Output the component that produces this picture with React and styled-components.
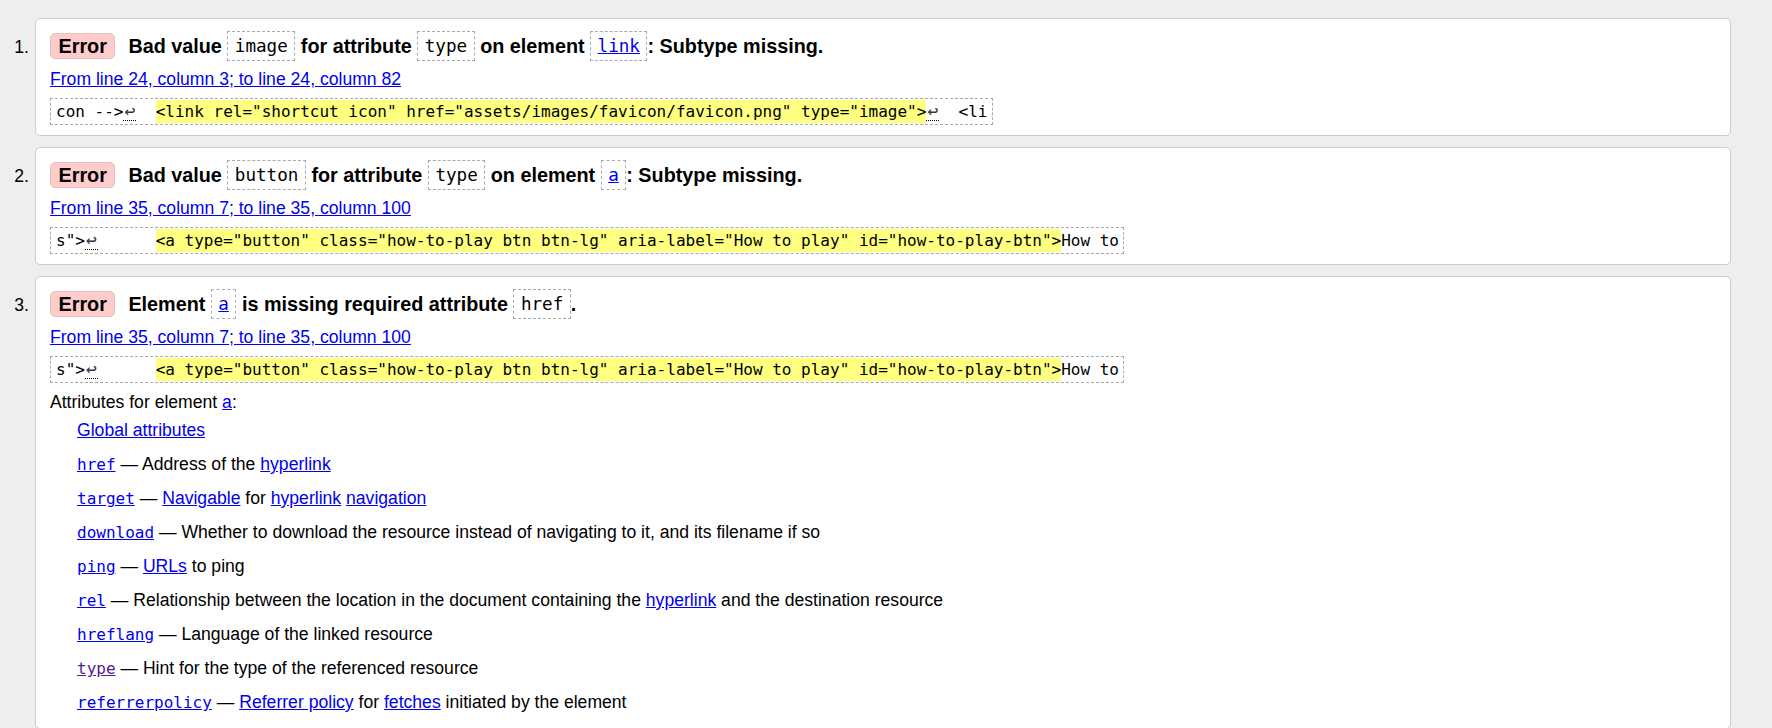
import React from 'react';
import styled, { createGlobalStyle } from 'styled-components';

const GlobalStyle = createGlobalStyle`
  html, body {
    margin: 0;
    padding: 0;
    background: #eeeeee;
    overflow: hidden;
  }
  body {
    font-family: "Liberation Sans", Arial, sans-serif;
    font-size: 17.6px;
    color: #000;
  }
`;

const List = styled.ol`
  list-style: none;
  margin: 0;
  padding: 18px 41px 0 0;
  display: flex;
  flex-direction: column;
  gap: 11px;
`;

const Item = styled.li`
  display: flex;
  align-items: baseline;
`;

const Num = styled.span`
  width: 29px;
  padding-right: 6px;
  flex: none;
  text-align: right;
  line-height: 24px;
`;

const Card = styled.div`
  flex: 1;
  background: #fff;
  border: 1px solid #cccccc;
  border-radius: 5px;
  padding: 12px 15px 10px 14px;
`;

const Title = styled.p`
  margin: 0;
  font-size: 19.8px;
  font-weight: bold;
  line-height: 30px;
`;

const Badge = styled.span`
  display: inline-block;
  vertical-align: top;
  margin: 2px 13px 0 0;
  height: 24px;
  line-height: 24px;
  padding: 0 7.5px;
  border: 1px solid #e6c0c0;
  border-radius: 5px;
  background: #ffcccc;
`;

const Code = styled.code`
  display: inline-block;
  vertical-align: top;
  font-family: "DejaVu Sans Mono", monospace;
  font-weight: normal;
  font-size: 17.6px;
  line-height: 28px;
  padding: 0 6.5px;
  border: 1px dashed #aaaaaa;
`;

const Link = styled.a`
  color: ${(p) => (p.$visited ? '#551a8b' : '#0000ee')};
  text-decoration: underline;
  cursor: pointer;
`;

const Location = styled.p`
  margin: 6px 0 0;
  line-height: 24px;
`;

const Extract = styled.div`
  margin-top: 7px;
  display: inline-block;
  font-family: "DejaVu Sans Mono", monospace;
  font-size: 16px;
  line-height: 23px;
  padding: 1px 4px 1px 5px;
  border: 1px dashed #aaaaaa;
  white-space: pre;
`;

const Mark = styled.mark`
  background: #ffff80;
  color: #000;
  padding: 2px 0;
`;

const LineBreak = styled.b`
  display: inline-block;
  width: 1.2ch;
  line-height: 18px;
  font-size: 18px;
  font-weight: normal;
  text-align: center;
  color: #334;
  border-bottom: 1px dotted #000;
`;

const Text = styled.p`
  margin: 7px 0 0;
  line-height: 24px;
`;

const AttrList = styled.dl`
  margin: 4px 0 4px 27px;
  display: flex;
  flex-direction: column;
  gap: 10px;
`;

const AttrItem = styled.dd`
  margin: 0;
  line-height: 24px;
  height: 24px;
`;

const AttrName = styled.code`
  font-family: "DejaVu Sans Mono", monospace;
  font-size: 16px;
  line-height: 1;
`;

const Lf = () => <LineBreak title="Line break">↩</LineBreak>;

const attributes = [
  { name: 'href', desc: <>Address of the <Link>hyperlink</Link></> },
  { name: 'target', desc: <><Link>Navigable</Link> for <Link>hyperlink</Link> <Link>navigation</Link></> },
  { name: 'download', desc: <>Whether to download the resource instead of navigating to it, and its filename if so</> },
  { name: 'ping', desc: <><Link>URLs</Link> to ping</> },
  { name: 'rel', desc: <>Relationship between the location in the document containing the <Link>hyperlink</Link> and the destination resource</> },
  { name: 'hreflang', desc: <>Language of the linked resource</> },
  { name: 'type', visited: true, desc: <>Hint for the type of the referenced resource</> },
  { name: 'referrerpolicy', desc: <><Link>Referrer policy</Link> for <Link>fetches</Link> initiated by the element</> },
];

const anchorExtract = (
  <Extract>
    {'s">'}<Lf />{'      '}
    <Mark>{'<a type="button" class="how-to-play btn btn-lg" aria-label="How to play" id="how-to-play-btn">'}</Mark>
    {'How to'}
  </Extract>
);

export default function App() {
  return (
    <>
      <GlobalStyle />
      <List>
        <Item>
          <Num>1.</Num>
          <Card>
            <Title>
              <Badge>Error</Badge>
              Bad value <Code>image</Code> for attribute <Code>type</Code> on element{' '}
              <Code><Link>link</Link></Code>: Subtype missing.
            </Title>
            <Location><Link>From line 24, column 3; to line 24, column 82</Link></Location>
            <Extract>
              {'con -->'}<Lf />{'  '}
              <Mark>{'<link rel="shortcut icon" href="assets/images/favicon/favicon.png" type="image">'}</Mark>
              <Lf />{'  <li'}
            </Extract>
          </Card>
        </Item>
        <Item>
          <Num>2.</Num>
          <Card>
            <Title>
              <Badge>Error</Badge>
              Bad value <Code>button</Code> for attribute <Code>type</Code> on element{' '}
              <Code><Link>a</Link></Code>: Subtype missing.
            </Title>
            <Location><Link>From line 35, column 7; to line 35, column 100</Link></Location>
            {anchorExtract}
          </Card>
        </Item>
        <Item>
          <Num>3.</Num>
          <Card>
            <Title>
              <Badge>Error</Badge>
              Element <Code><Link>a</Link></Code> is missing required attribute <Code>href</Code>.
            </Title>
            <Location><Link>From line 35, column 7; to line 35, column 100</Link></Location>
            {anchorExtract}
            <Text>Attributes for element <Link>a</Link>:</Text>
            <AttrList>
              <AttrItem><Link>Global attributes</Link></AttrItem>
              {attributes.map((a) => (
                <AttrItem key={a.name}>
                  <Link $visited={a.visited}><AttrName>{a.name}</AttrName></Link> — {a.desc}
                </AttrItem>
              ))}
            </AttrList>
          </Card>
        </Item>
      </List>
    </>
  );
}
